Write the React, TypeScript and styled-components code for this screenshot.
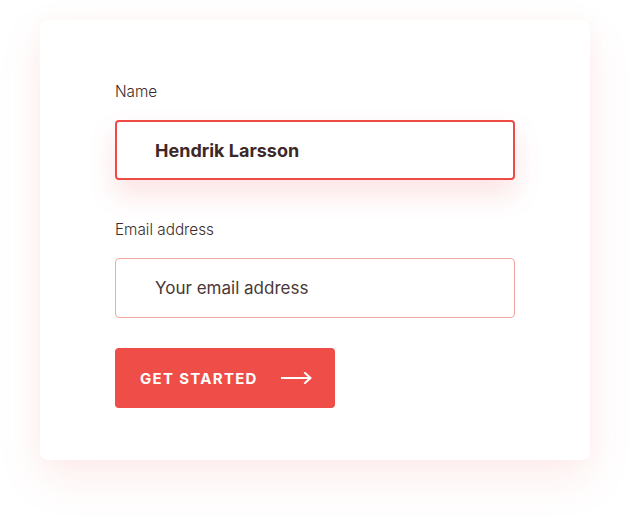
import React from "react";
import styled, { createGlobalStyle } from "styled-components";

const Global = createGlobalStyle`
  html, body { margin: 0; padding: 0; background: #ffffff; }
  body { font-family: Rubik, Inter, "Open Sans", sans-serif; }
  * { box-sizing: border-box; }
`;

const Page = styled.div`
  width: 630px;
  height: 520px;
  padding: 20px 40px 0 40px;
  background: #ffffff;
`;

const Card = styled.form`
  width: 550px;
  height: 440px;
  background: #ffffff;
  border-radius: 8px;
  box-shadow: 0 18px 45px rgba(239, 77, 72, 0.1), 0 0 20px rgba(239, 77, 72, 0.03);
  padding: 63px 75px 0 75px;
  display: flex;
  flex-direction: column;
`;

const Field = styled.div`
  display: flex;
  flex-direction: column;
  gap: 19px;
  margin-bottom: 41px;
  &:last-of-type { margin-bottom: 30px; }
`;

const Label = styled.label`
  font-family: Inter, "Open Sans", sans-serif;
  font-weight: 300;
  font-size: 15.3px;
  line-height: 18px;
  color: #3e2c2c;
`;

const Input = styled.input<{ $active?: boolean }>`
  width: 400px;
  height: 60px;
  padding: 0 0 0 ${(p) => (p.$active ? 38 : 39)}px;
  border: ${(p) => (p.$active ? "2px solid #ee4b46" : "1px solid #f5a5a2")};
  border-radius: 4px;
  outline: none;
  font-family: Inter, "Open Sans", sans-serif;
  font-size: ${(p) => (p.$active ? 18 : 17)}px;
  font-weight: ${(p) => (p.$active ? 700 : 400)};
  color: #3d2828;
  background: #ffffff;
  box-shadow: ${(p) => (p.$active ? "0 14px 28px rgba(239, 77, 72, 0.16)" : "none")};
  &::placeholder { color: #4a3838; opacity: 1; }
`;

const Button = styled.button`
  width: 220px;
  height: 60px;
  border: none;
  border-radius: 4px;
  background: #ef4d48;
  color: #ffffff;
  display: flex;
  align-items: center;
  gap: 23px;
  padding: 0 0 0 25px;
  font-family: Inter, "Open Sans", sans-serif;
  font-weight: 700;
  font-size: 15px;
  letter-spacing: 1.3px;
  cursor: pointer;
`;

const Arrow = () => (
  <svg width="31" height="12" viewBox="0 0 31 12" fill="none" stroke="#ffffff" strokeWidth="2" strokeLinecap="square">
    <path d="M1 6 H29" />
    <path d="M24 1 L29.5 6 L24 11" strokeLinejoin="miter" />
  </svg>
);

export default function App() {
  return (
    <>
      <Global />
      <Page>
        <Card onSubmit={(e) => e.preventDefault()}>
          <Field>
            <Label htmlFor="name">Name</Label>
            <Input id="name" $active defaultValue="Hendrik Larsson" />
          </Field>
          <Field>
            <Label htmlFor="email">Email address</Label>
            <Input id="email" placeholder="Your email address" />
          </Field>
          <Button type="submit">
            GET STARTED
            <Arrow />
          </Button>
        </Card>
      </Page>
    </>
  );
}
